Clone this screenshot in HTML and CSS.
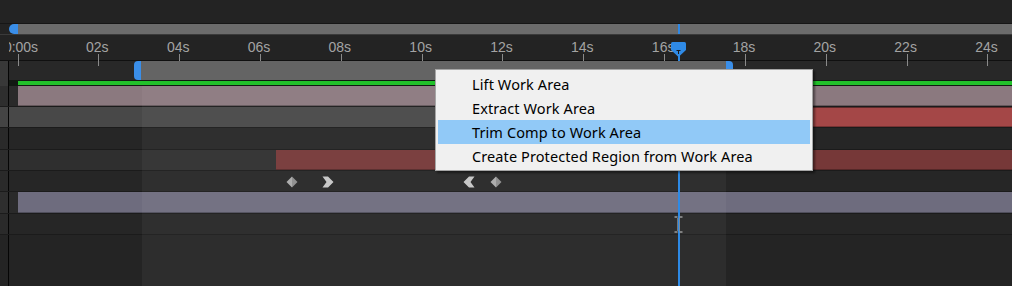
FILE: index.html
```html
<!DOCTYPE html>
<html lang="en">
<head>
  <meta charset="UTF-8" />
  <title>Timeline - Work Area Menu</title>
  <link rel="stylesheet" href="styles.css">
</head>
<body>

<div class="timeline">
  <div class="topbar"></div>

  <!-- navigator -->
  <div class="navigator">
    <span class="nav-handle"></span>
    <div class="nav-bar"><span class="nav-marker" style="margin-left: 660px"></span></div>
  </div>

  <!-- time ruler -->
  <div class="ruler">
    <div class="scale">
      <div class="tick first"><span>0:00s</span><i></i></div>
      <div class="tick"><span>02s</span><i></i></div>
      <div class="tick"><span>04s</span><i></i></div>
      <div class="tick"><span>06s</span><i></i></div>
      <div class="tick"><span>08s</span><i></i></div>
      <div class="tick"><span>10s</span><i></i></div>
      <div class="tick"><span>12s</span><i></i></div>
      <div class="tick"><span>14s</span><i></i></div>
      <div class="tick"><span>16s</span><i></i></div>
      <div class="tick"><span>18s</span><i></i></div>
      <div class="tick"><span>20s</span><i></i></div>
      <div class="tick"><span>22s</span><i></i></div>
      <div class="tick"><span>24s</span><i></i></div>
    </div>
  </div>

  <!-- work area -->
  <div class="workarea">
    <div class="gutter"></div>
    <div class="wa-track">
      <span class="wa-handle left"></span>
      <span class="wa-bar"></span>
      <span class="wa-handle right"></span>
    </div>
  </div>

  <div class="cache">
    <div class="gutter"></div>
    <div class="cache-track"><span class="cache-fill"></span></div>
  </div>

  <!-- layers -->
  <div class="layer row-pink">
    <div class="gutter"></div>
    <div class="track"><span class="bar pink"></span></div>
  </div>
  <div class="layer row-selected">
    <div class="gutter"></div>
    <div class="track"><span class="bar red" style="margin-left: 560px"></span></div>
  </div>
  <div class="layer tall">
    <div class="gutter"></div>
    <div class="track"></div>
  </div>
  <div class="layer row-mid">
    <div class="gutter"></div>
    <div class="track"><span class="bar maroon" style="margin-left: 258px"></span></div>
  </div>
  <div class="layer">
    <div class="gutter"></div>
    <div class="track keys">
      <svg class="key" style="margin-left: 268px" width="12" height="12" viewBox="0 0 12 12">
        <polygon points="6,0.5 6,11.5 0.5,6" fill="#ababab"/>
        <polygon points="6,0.5 11.5,6 6,11.5" fill="#8e8e8e"/>
      </svg>
      <svg class="key" style="margin-left: 24px" width="12" height="12" viewBox="0 0 12 12">
        <polygon points="0.5,0.5 6,0.5 11.5,6 6,11.5 0.5,11.5 4.5,6" fill="#c6c6c6"/>
      </svg>
      <svg class="key" style="margin-left: 129px" width="12" height="12" viewBox="0 0 12 12">
        <polygon points="11.5,0.5 6,0.5 0.5,6 6,11.5 11.5,11.5 7.5,6" fill="#c6c6c6"/>
      </svg>
      <svg class="key" style="margin-left: 15px" width="12" height="12" viewBox="0 0 12 12">
        <polygon points="6,0.5 6,11.5 0.5,6" fill="#ababab"/>
        <polygon points="6,0.5 11.5,6 6,11.5" fill="#8e8e8e"/>
      </svg>
    </div>
  </div>
  <div class="layer tall row-pink">
    <div class="gutter"></div>
    <div class="track"><span class="bar lavender"></span></div>
  </div>
  <div class="layer">
    <div class="gutter"></div>
    <div class="track"></div>
  </div>
  <div class="filler">
    <div class="gutter"></div>
    <div class="track"></div>
  </div>

  <!-- overlays -->
  <div class="work-shade"></div>

  <div class="playhead-line"></div>
  <svg class="playhead-head" width="15" height="15" viewBox="0 0 15 15">
    <path d="M0 1.5 Q0 0 1.5 0 H13.5 Q15 0 15 1.5 V8 L7.5 15 L0 8 Z" fill="#2f8ae6"/>
    <path d="M5.5 8.5 H9.5 M7.5 8.5 V12" stroke="#1a1a1a" stroke-width="1"/>
  </svg>

  <svg class="ibeam" width="9" height="17" viewBox="0 0 9 17">
    <path d="M0.5 1 H3.5 M5.5 1 H8.5 M0.5 16 H3.5 M5.5 16 H8.5" stroke="#9a9a9a" stroke-width="1.4"/>
    <path d="M3.5 2 V15 M5.5 2 V15" stroke="#8a8a8a" stroke-width="0.8"/>
  </svg>

  <ul class="context-menu">
    <li>Lift Work Area</li>
    <li>Extract Work Area</li>
    <li class="active">Trim Comp to Work Area</li>
    <li>Create Protected Region from Work Area</li>
  </ul>
</div>

</body>
</html>
```

FILE: styles.css
```css
body {
  margin: 0;
  background: #232323;
  font-family: "Liberation Sans", Arial, sans-serif;
}
.timeline {
  position: relative;
  width: 1012px;
  height: 286px;
  overflow: hidden;
  display: flex;
  flex-direction: column;
}
.topbar {
  height: 23px;
  flex: none;
}

/* navigator */
.navigator {
  display: flex;
  height: 12px;
  flex: none;
  box-sizing: border-box;
  border-top: 1px solid #161616;
  border-bottom: 1px solid #3a3a3a;
  padding-left: 9px;
}
.nav-handle {
  width: 9px;
  background: #3a8ee8;
  border-radius: 5px 0 0 5px;
}
.nav-bar {
  flex: 1;
  display: flex;
  background: #6b6b6b;
}
.nav-marker {
  width: 2px;
  background: #2f88e4;
}

/* ruler */
.ruler {
  height: 25px;
  flex: none;
  box-sizing: border-box;
  padding-top: 5px;
  clip-path: inset(0 0 -7px 9px); /* let the ticks run into the work area row */
}
.scale {
  display: flex;
  margin-left: -22.42px;
}
.tick {
  flex: none;
  width: 80.83px;
  display: flex;
  flex-direction: column;
  align-items: center;
}
.tick span {
  font-size: 14px;
  line-height: 14px;
  color: #a3a3a3;
  white-space: nowrap;
  transform: translateX(-1.5px);
}
.tick.first span {
  transform: translateX(3px);
}
.tick i {
  width: 1px;
  height: 12px;
  background: #8a8a8a;
}

/* left gutter */
.gutter {
  width: 8px;
  flex: none;
  border-right: 1px solid #050505;
  background: #2a2a2a;
}

/* work area */
.workarea {
  display: flex;
  height: 20px;
  flex: none;
  box-sizing: border-box;
  border-top: 1px solid #101010;
}
.workarea .gutter,
.cache .gutter {
  background: #383838;
}
.wa-track {
  flex: 1;
  display: flex;
  background: #282828;
}
.wa-handle,
.wa-bar {
  position: relative;
  z-index: 1;
}
.wa-handle {
  width: 7px;
  background: #3a8ee8;
}
.wa-handle.left {
  margin-left: 125px;
  border-radius: 4px 0 0 4px;
}
.wa-handle.right {
  border-radius: 0 4px 4px 0;
}
.wa-bar {
  width: 585px;
  background: #646464;
}

/* cache bar */
.cache {
  display: flex;
  height: 6px;
  flex: none;
}
.cache-track {
  flex: 1;
  display: flex;
  padding: 1px 0 1px 9px;
  background: #121812;
}
.cache-fill {
  flex: 1;
  background: #22c02a;
}

/* layers */
.layer {
  display: flex;
  height: 21px;
  flex: none;
  box-sizing: border-box;
  border-bottom: 1px solid #1b1b1b;
}
.layer.tall {
  height: 22px;
}
.track {
  flex: 1;
  display: flex;
  padding-left: 9px;
  background: #262626;
}
.row-pink .gutter { background: #2e2e2e; }
.row-pink .track { background: #2a2a2a; }
.row-selected .gutter { background: #444; }
.row-selected .track { background: #484848; }
.row-mid .gutter { background: #2d2d2d; }
.row-mid .track { background: #2f2f2f; }

.bar {
  flex: 1;
  box-sizing: border-box;
  border-bottom: 1px solid rgba(0, 0, 0, 0.28);
}
.bar.pink { background: #8b797f; }
.bar.red {
  background: #a44747;
  border-top: 1px solid #5c2b2b;
}
.bar.maroon { background: #763838; }
.bar.lavender { background: #6e6c7e; }

.keys {
  align-items: flex-start;
  padding-top: 5px;
  box-sizing: border-box;
}
.key {
  flex: none;
  display: block;
}

.filler {
  flex: 1;
  display: flex;
}
.filler .gutter { background: #242424; }
.filler .track { background: #242424; }

/* overlays */
.work-shade {
  position: absolute;
  left: 142px;
  width: 584px;
  top: 86px;
  bottom: 0;
  background: rgba(255, 255, 255, 0.045);
}
.playhead-line {
  position: absolute;
  left: 678px;
  top: 50px;
  bottom: 0;
  width: 2px;
  background: #2d8ae6;
}
.playhead-head {
  position: absolute;
  left: 671px;
  top: 42px;
}
.ibeam {
  position: absolute;
  left: 674px;
  top: 216px;
}

/* context menu */
.context-menu {
  position: absolute;
  z-index: 5;
  left: 435px;
  top: 69px;
  width: 378px;
  box-sizing: border-box;
  margin: 0;
  padding: 2px;
  list-style: none;
  background: #f0f0f0;
  border: 1px solid #a6a6a6;
  box-shadow: 2px 2px 2px rgba(0, 0, 0, 0.45);
  font-family: "Noto Sans", "Open Sans", sans-serif;
  font-size: 14.5px;
  letter-spacing: 0.1px;
  color: #000;
}
.context-menu li {
  height: 24px;
  line-height: 24px;
  padding-left: 34px;
  white-space: nowrap;
}
.context-menu li.active {
  background: #91c9f7;
}
```
